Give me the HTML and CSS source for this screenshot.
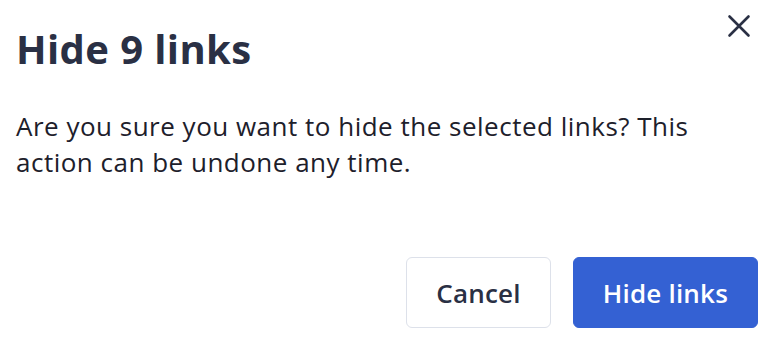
FILE: index.html
```html
<!DOCTYPE html>
<html lang="en">
<head>
<meta charset="utf-8">
<title>Hide 9 links</title>
<link rel="stylesheet" href="styles.css">
</head>
<body>
<div class="dialog">
  <button class="close" aria-label="Close">
    <svg width="24" height="24" viewBox="0 0 24 24" aria-hidden="true">
      <path d="M2.5 2.5 L21.5 21.5 M21.5 2.5 L2.5 21.5" stroke="#2a3044" stroke-width="2.6" stroke-linecap="round" fill="none"/>
    </svg>
  </button>
  <h1 class="title">Hide 9 links</h1>
  <p class="message">Are you sure you want to hide the selected links? This action can be undone any time.</p>
  <div class="actions">
    <button class="btn btn-secondary">Cancel</button>
    <button class="btn btn-primary">Hide links</button>
  </div>
</div>
</body>
</html>
```

FILE: styles.css
```css
html, body {
  margin: 0;
  padding: 0;
  background: #ffffff;
}

body {
  font-family: "Open Sans", "Liberation Sans", sans-serif;
}

.dialog {
  position: relative;
  width: 778px;
  height: 346px;
  box-sizing: border-box;
  padding: 25px 20px 0 16px;
}

.close {
  position: absolute;
  top: 14px;
  right: 27px;
  width: 24px;
  height: 24px;
  padding: 0;
  margin: 0;
  border: 0;
  background: transparent;
  display: flex;
}

.title {
  margin: 0;
  font-size: 40px;
  line-height: 48px;
  font-weight: 700;
  letter-spacing: 0.4px;
  color: #2a3044;
}

.message {
  margin: 35px 0 0 0;
  max-width: 700px;
  font-size: 26px;
  line-height: 36px;
  letter-spacing: 0.5px;
  color: #1d202b;
}

.actions {
  margin-top: 77px;
  display: flex;
  justify-content: flex-end;
  gap: 22px;
}

.btn {
  height: 71px;
  box-sizing: border-box;
  border-radius: 6px;
  font-family: "Open Sans", "Liberation Sans", sans-serif;
  font-size: 26px;
  font-weight: 600;
  letter-spacing: 0.2px;
  display: flex;
  align-items: center;
  justify-content: center;
}

.btn-secondary {
  padding: 0 29px;
  background: #ffffff;
  border: 1px solid #dde1ea;
  color: #2a3044;
}

.btn-primary {
  padding: 0 29px;
  background: #3461d3;
  border: 1px solid #3461d3;
  color: #ffffff;
}
```
